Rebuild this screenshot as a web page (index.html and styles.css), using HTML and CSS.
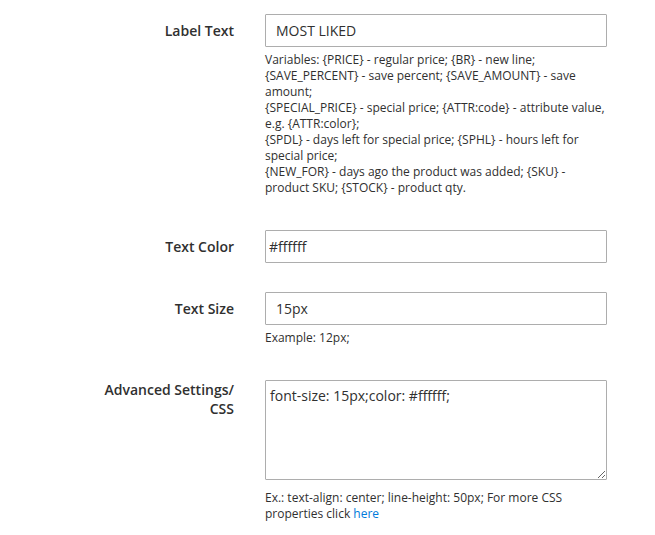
FILE: index.html
```html
<!DOCTYPE html>
<html lang="en">
<head>
  <meta charset="UTF-8" />
  <title>Label Settings</title>
  <link rel="stylesheet" href="styles.css">
</head>
<body>

<form class="admin-form">
  <div class="field">
    <label class="field-label" for="labelText">Label Text</label>
    <div class="field-control">
      <input type="text" id="labelText" class="input-text" value="MOST LIKED" />
      <div class="note">
        Variables: {PRICE} - regular price; {BR} - new line;<br>
        {SAVE_PERCENT} - save percent; {SAVE_AMOUNT} - save amount;<br>
        {SPECIAL_PRICE} - special price; {ATTR:code} - attribute value, e.g. {ATTR:color};<br>
        {SPDL} - days left for special price; {SPHL} - hours left for special price;<br>
        {NEW_FOR} - days ago the product was added; {SKU} - product SKU; {STOCK} - product qty.
      </div>
    </div>
  </div>

  <div class="field">
    <label class="field-label" for="textColor">Text Color</label>
    <div class="field-control">
      <input type="text" id="textColor" class="input-text input-color" value="#ffffff" />
    </div>
  </div>

  <div class="field">
    <label class="field-label" for="textSize">Text Size</label>
    <div class="field-control">
      <input type="text" id="textSize" class="input-text" value="15px" />
      <div class="note">Example: 12px;</div>
    </div>
  </div>

  <div class="field">
    <label class="field-label field-label-multi" for="customCss">Advanced Settings/<br>CSS</label>
    <div class="field-control">
      <textarea id="customCss" class="textarea">font-size: 15px;color: #ffffff;</textarea>
      <div class="note note-textarea">
        Ex.: text-align: center; line-height: 50px; For more CSS properties click <a href="#">here</a>
      </div>
    </div>
  </div>
</form>

</body>
</html>
```

FILE: styles.css
```css
body {
  margin: 0;
  font-family: "Open Sans", "Liberation Sans", Arial, sans-serif;
  color: #303030;
  background: #fff;
}
.admin-form {
  padding-top: 14px;
}
.field {
  display: flex;
  gap: 31px;
  margin-bottom: 29px;
}
.field-label {
  width: 234px;
  flex-shrink: 0;
  text-align: right;
  font-size: 14px;
  font-weight: 600;
  line-height: 19px;
  padding-top: 7px;
  color: #303030;
}
.field-label-multi {
  padding-top: 0;
}
.field-control {
  width: 342px;
}
.input-text,
.textarea {
  display: block;
  box-sizing: border-box;
  width: 342px;
  margin: 0;
  border: 1px solid #adadad;
  border-radius: 1px;
  font-family: "Open Sans", "Liberation Sans", Arial, sans-serif;
  font-size: 14px;
  color: #303030;
  background: #fff;
  outline: none;
}
.input-text {
  height: 33px;
  padding: 0 10px;
}
.input-color {
  padding-left: 3px;
}
.textarea {
  height: 100px;
  padding: 5px 4px;
  line-height: 20px;
}
.note {
  margin: 5px 0;
  font-size: 12px;
  line-height: 16px;
  color: #303030;
}
.note-textarea {
  margin-top: 10px;
}
.note a {
  color: #007bdb;
  text-decoration: none;
}
```
